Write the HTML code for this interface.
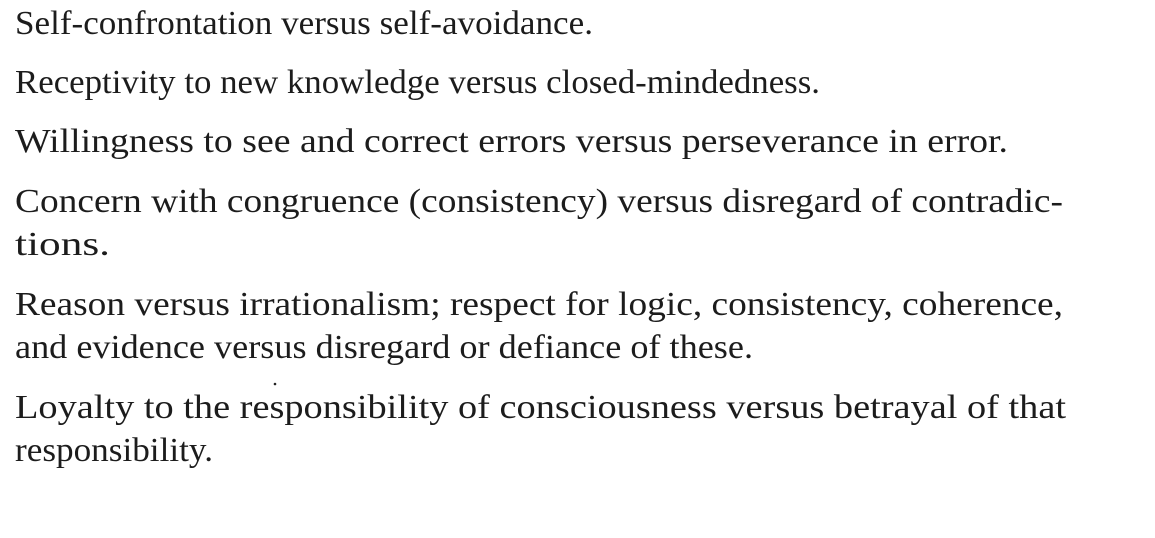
<!DOCTYPE html>
<html><head><meta charset="utf-8"><style>
html,body{margin:0;padding:0;background:#fff;width:1155px;height:538px;overflow:hidden}
svg{display:block}
text{font-family:"Liberation Serif",serif;font-size:34px;fill:#1c1c1c}
</style></head><body>
<svg width="1155" height="538" xmlns="http://www.w3.org/2000/svg">
<text x="15" y="34" textLength="578" lengthAdjust="spacingAndGlyphs">Self-confrontation versus self-avoidance.</text>
<text x="15" y="93" textLength="805" lengthAdjust="spacingAndGlyphs">Receptivity to new knowledge versus closed-mindedness.</text>
<text x="15" y="152" textLength="993" lengthAdjust="spacingAndGlyphs">Willingness to see and correct errors versus perseverance in error.</text>
<text x="15" y="212" textLength="1048" lengthAdjust="spacingAndGlyphs">Concern with congruence (consistency) versus disregard of contradic-</text>
<text x="15" y="255" textLength="95" lengthAdjust="spacingAndGlyphs">tions.</text>
<text x="15" y="315" textLength="1048" lengthAdjust="spacingAndGlyphs">Reason versus irrationalism; respect for logic, consistency, coherence,</text>
<text x="15" y="358" textLength="738" lengthAdjust="spacingAndGlyphs">and evidence versus disregard or defiance of these.</text>
<circle cx="275" cy="384" r="1.3" fill="#222"/>
<text x="15" y="418" textLength="1051" lengthAdjust="spacingAndGlyphs">Loyalty to the responsibility of consciousness versus betrayal of that</text>
<text x="15" y="461" textLength="198" lengthAdjust="spacingAndGlyphs">responsibility.</text>
</svg>
</body></html>
